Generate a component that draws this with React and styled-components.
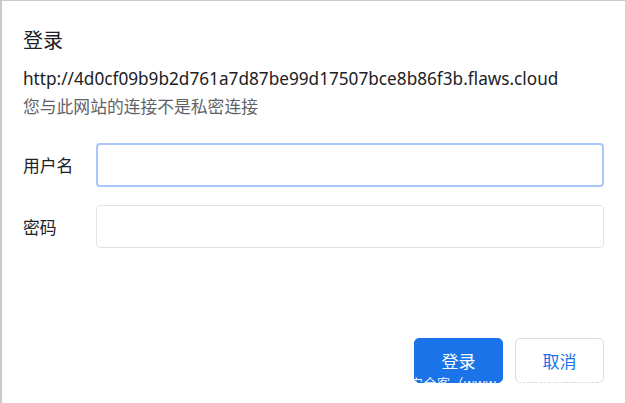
import React from "react";
import styled, { createGlobalStyle } from "styled-components";

const Global = createGlobalStyle`
  html, body {
    margin: 0;
    padding: 0;
    background: #fff;
  }
  * { box-sizing: border-box; }
`;

const Dialog = styled.div`
  position: relative;
  width: 625px;
  height: 403px;
  overflow: hidden;
  border-top: 1px solid #c9c9c9;
  border-left: 2px solid #c9c9c9;
  padding: 24px 21px 0 21px;
  font-family: "Noto Sans", "Noto Sans CJK SC", sans-serif;
  color: #202124;
`;

const Accent = styled.div`
  position: absolute;
  left: -2px;
  top: 0;
  width: 2px;
  height: 50px;
  background: #8c4a63;
`;

const Title = styled.h1`
  margin: 0;
  font-size: 20px;
  font-weight: 400;
  line-height: 32px;
`;

const Url = styled.div`
  margin-top: 10px;
  font-size: 17.2px;
  line-height: 24px;
`;

const Note = styled.div`
  margin-top: 4px;
  font-size: 16.8px;
  line-height: 24px;
  color: #5f6368;
`;

const Form = styled.div`
  margin-top: 24px;
  display: grid;
  grid-template-columns: 73px 1fr;
  row-gap: 18px;
  align-items: center;
`;

const Label = styled.label`
  font-size: 16.8px;
`;

const Input = styled.input`
  display: block;
  width: 100%;
  height: ${(p) => (p.$focused ? 44 : 43)}px;
  border-radius: 4px;
  border: ${(p) => (p.$focused ? "2px solid #a8c7fa" : "1px solid #e3e3e3")};
  outline: none;
  background: #fff;
  font-size: 16px;
`;

const Actions = styled.div`
  margin-top: 90px;
  display: flex;
  justify-content: flex-end;
  gap: 12px;
`;

const Button = styled.button`
  width: 89px;
  height: 45px;
  border-radius: 5px;
  font-family: "Noto Sans", "Noto Sans CJK SC", sans-serif;
  font-size: 17px;
  border: 1px solid ${(p) => (p.$primary ? "#1a73e8" : "#dadce0")};
  background: ${(p) => (p.$primary ? "#1a73e8" : "#fff")};
  color: ${(p) => (p.$primary ? "#fff" : "#1a73e8")};
`;

const Watermark = styled.div`
  position: absolute;
  left: 408px;
  top: 372px;
  font-size: 13px;
  letter-spacing: 0.5px;
  color: rgba(255, 255, 255, 0.95);
  white-space: nowrap;
  pointer-events: none;
`;

export default function App() {
  return (
    <>
      <Global />
      <Dialog>
        <Accent />
        <Title>登录</Title>
        <Url>http://4d0cf09b9b2d761a7d87be99d17507bce8b86f3b.flaws.cloud</Url>
        <Note>您与此网站的连接不是私密连接</Note>
        <Form>
          <Label>用户名</Label>
          <Input $focused type="text" />
          <Label>密码</Label>
          <Input type="password" />
        </Form>
        <Actions>
          <Button $primary>登录</Button>
          <Button>取消</Button>
        </Actions>
        <Watermark>安全客（www.anquanke.com）</Watermark>
      </Dialog>
    </>
  );
}
